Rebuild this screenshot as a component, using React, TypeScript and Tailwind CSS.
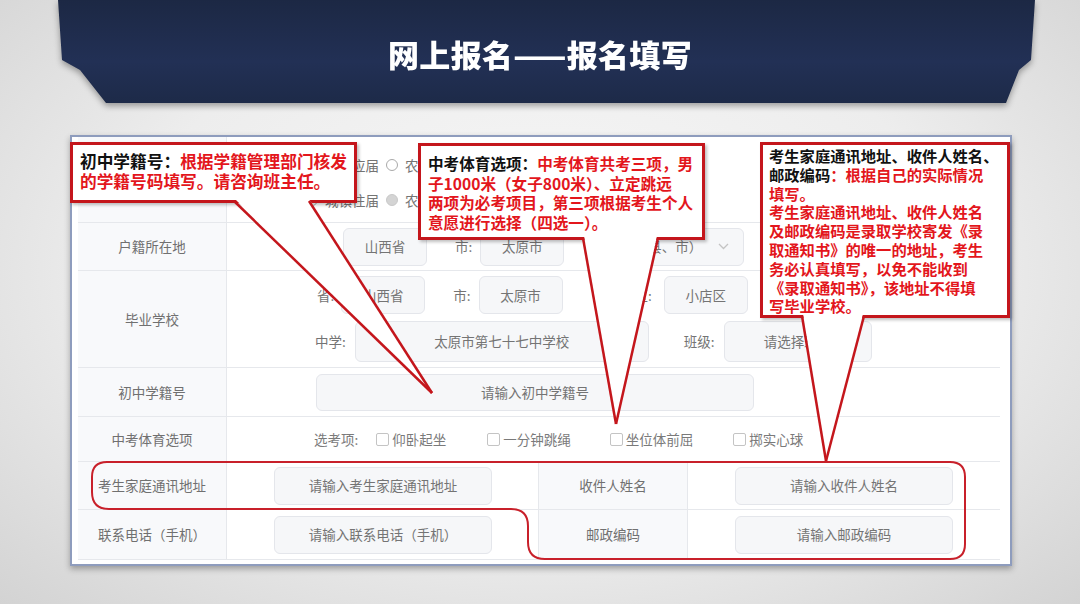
import React from "react";

const FONT = "font-['Noto_Sans_CJK_SC','Noto_Sans',sans-serif]";

function Box({ className = "", children }: { className?: string; children?: React.ReactNode }) {
  return (
    <div
      className={`flex items-center justify-center rounded-[6px] border border-[#e4e6eb] bg-[#f6f7f9] text-[13.5px] text-[#747474] ${className}`}
    >
      {children}
    </div>
  );
}

function Label({ children, className = "" }: { children?: React.ReactNode; className?: string }) {
  return (
    <div
      className={`flex w-[149px] shrink-0 items-center justify-center border-r border-[#e6e8ec] bg-[#f8f9fb] text-[13.5px] text-[#707070] ${className}`}
    >
      {children}
    </div>
  );
}

function Radio({ checked = false }: { checked?: boolean }) {
  return (
    <span
      className={`inline-block h-[12px] w-[12px] shrink-0 rounded-full border ${
        checked ? "border-[#c9c9c9] bg-[#d4d4d4]" : "border-[#a9a9a9] bg-white"
      }`}
    />
  );
}

function Check() {
  return <span className="inline-block h-[13px] w-[13px] shrink-0 rounded-[2px] border border-[#c4c4c4] bg-white" />;
}

export default function App() {
  return (
    <div
      className={`relative h-[604px] w-[1080px] overflow-hidden bg-[radial-gradient(ellipse_at_50%_45%,#f8f8f8_0%,#ededed_55%,#d3d3d3_100%)] ${FONT}`}
    >
      {/* Title banner */}
      <div className="h-[104px] [filter:drop-shadow(0_3px_3px_rgba(0,0,0,0.35))]">
        <div className="flex h-[103px] items-center justify-center bg-[linear-gradient(180deg,#1c2844_0%,#223055_60%,#1d2a48_100%)] pt-[4px] [clip-path:polygon(58px_0,1035px_0,1031px_60px,1019px_70px,1006px_103px,106px_103px,80px_70px,62px_60px)]">
          <h1 className="text-[31px] font-black leading-none tracking-[0.3px] text-white">网上报名——报名填写</h1>
        </div>
      </div>

      {/* Form panel */}
      <div className="ml-[70px] mt-[31px] h-[431px] w-[942px] border-2 border-[#8e9cbd] bg-white pl-[6px] pr-[10px] shadow-[0_3px_6px_rgba(0,0,0,0.3)]">
        {/* Row A */}
        <div className="flex h-[86px] border-b border-[#e6e8ec]">
          <Label />
          <div className="flex flex-col gap-[15px] pl-[79px] pt-[18px] text-[13.5px] text-[#747474]">
            <div className="flex h-[20px] items-center">
              <Radio />
              <span className="ml-[7px]">城镇应届</span>
              <span className="ml-[7px] flex"><Radio /></span>
              <span className="ml-[7px]">农村应届</span>
            </div>
            <div className="flex h-[20px] items-center">
              <Radio />
              <span className="ml-[7px]">城镇往届</span>
              <span className="ml-[7px] flex"><Radio checked /></span>
              <span className="ml-[7px]">农村往届</span>
            </div>
          </div>
        </div>

        {/* Row B 户籍所在地 */}
        <div className="flex h-[48px] border-b border-[#e6e8ec]">
          <Label>户籍所在地</Label>
          <div className="flex items-center pl-[116px] text-[13.5px] text-[#747474]">
            <Box className="h-[38px] w-[84px]">山西省</Box>
            <span className="ml-[28px]">市:</span>
            <Box className="ml-[8px] h-[38px] w-[84px]">太原市</Box>
            <Box className="ml-[30px] h-[38px] w-[150px] !justify-end pr-[14px]">
              <span>区（县、市）</span>
              <svg className="ml-[16px]" width="11" height="7" viewBox="0 0 11 7">
                <path d="M1 1l4.5 4.5L10 1" fill="none" stroke="#c4c4c4" strokeWidth="1.3" />
              </svg>
            </Box>
          </div>
        </div>

        {/* Row C 毕业学校 */}
        <div className="flex h-[97px] border-b border-[#e6e8ec]">
          <Label>毕业学校</Label>
          <div className="flex flex-col gap-[7px] pt-[5px] text-[13.5px] text-[#747474]">
            <div className="flex items-center pl-[90px]">
              <span>省:</span>
              <Box className="ml-[7px] h-[38px] w-[84px]">山西省</Box>
              <span className="ml-[28px]">市:</span>
              <Box className="ml-[8px] h-[38px] w-[84px]">太原市</Box>
              <span className="ml-[72px]">区:</span>
              <Box className="ml-[12px] h-[38px] w-[84px]">小店区</Box>
            </div>
            <div className="flex items-center pl-[88px]">
              <span>中学:</span>
              <Box className="ml-[9px] h-[41px] w-[294px]">太原市第七十七中学校</Box>
              <span className="ml-[35px]">班级:</span>
              <Box className="ml-[9px] h-[41px] w-[148px]">请选择班级</Box>
            </div>
          </div>
        </div>

        {/* Row D 初中学籍号 */}
        <div className="flex h-[49px] border-b border-[#e6e8ec]">
          <Label>初中学籍号</Label>
          <div className="flex items-center pl-[89px]">
            <Box className="h-[37px] w-[438px]">请输入初中学籍号</Box>
          </div>
        </div>

        {/* Row E 中考体育选项 */}
        <div className="flex h-[45px] border-b border-[#e6e8ec]">
          <Label>中考体育选项</Label>
          <div className="flex items-center pl-[87px] text-[13.5px] text-[#7a7a7a]">
            <span>选考项:</span>
            <span className="ml-[18px] flex"><Check /></span>
            <span className="ml-[3px]">仰卧起坐</span>
            <span className="ml-[41px] flex"><Check /></span>
            <span className="ml-[3px]">一分钟跳绳</span>
            <span className="ml-[39px] flex"><Check /></span>
            <span className="ml-[3px]">坐位体前屈</span>
            <span className="ml-[40px] flex"><Check /></span>
            <span className="ml-[3px]">掷实心球</span>
          </div>
        </div>

        {/* Row F */}
        <div className="flex h-[48px] border-b border-[#e6e8ec]">
          <Label>考生家庭通讯地址</Label>
          <div className="flex w-[312px] items-center border-r border-[#e6e8ec] pl-[47px]">
            <Box className="h-[38px] w-[218px]">请输入考生家庭通讯地址</Box>
          </div>
          <Label>收件人姓名</Label>
          <div className="flex items-center pl-[47px]">
            <Box className="h-[38px] w-[218px]">请输入收件人姓名</Box>
          </div>
        </div>

        {/* Row G */}
        <div className="flex h-[50px] border-b border-[#e6e8ec]">
          <Label>联系电话（手机）</Label>
          <div className="flex w-[312px] items-center border-r border-[#e6e8ec] pl-[47px]">
            <Box className="h-[38px] w-[218px]">请输入联系电话（手机）</Box>
          </div>
          <Label>邮政编码</Label>
          <div className="flex items-center pl-[47px]">
            <Box className="h-[38px] w-[218px]">请输入邮政编码</Box>
          </div>
        </div>
      </div>

      {/* Callout 1 */}
      <div className="absolute left-[70px] top-[142px] h-[61px] w-[287px] border-[3px] border-[#c4161c] bg-white pl-[7px] pt-[6px] text-[16.7px] font-bold leading-[20px] shadow-[2px_2px_3px_rgba(0,0,0,0.25)]">
        <div>
          <span className="text-[#111]">初中学籍号：</span>
          <span className="text-[#e3161c]">根据学籍管理部门核发</span>
        </div>
        <div className="text-[#e3161c]">的学籍号码填写。请咨询班主任。</div>
      </div>

      {/* Callout 2 */}
      <div className="absolute left-[418px] top-[143px] h-[97px] w-[287px] border-[3px] border-[#c4161c] bg-white pl-[7px] pt-[8px] text-[15.6px] font-bold leading-[19.5px] shadow-[2px_2px_3px_rgba(0,0,0,0.25)]">
        <div>
          <span className="text-[#111]">中考体育选项：</span>
          <span className="text-[#e3161c]">中考体育共考三项，男</span>
        </div>
        <div className="text-[#e3161c]">子1000米（女子800米）、立定跳远</div>
        <div className="text-[#e3161c]">两项为必考项目，第三项根据考生个人</div>
        <div className="text-[#e3161c]">意愿进行选择（四选一）。</div>
      </div>

      {/* Callout 3 */}
      <div className="absolute left-[760px] top-[142px] h-[176px] w-[250px] border-[3px] border-[#c4161c] bg-white pl-[6px] pt-[1px] text-[15.3px] font-bold leading-[18.8px] shadow-[2px_2px_3px_rgba(0,0,0,0.25)]">
        <div className="text-[#111]">考生家庭通讯地址、收件人姓名、</div>
        <div>
          <span className="text-[#111]">邮政编码</span>
          <span className="text-[#e3161c]">：根据自己的实际情况</span>
        </div>
        <div className="text-[#e3161c]">填写。</div>
        <div className="text-[#e3161c]">考生家庭通讯地址、收件人姓名</div>
        <div className="text-[#e3161c]">及邮政编码是录取学校寄发《录</div>
        <div className="text-[#e3161c]">取通知书》的唯一的地址，考生</div>
        <div className="text-[#e3161c]">务必认真填写，以免不能收到</div>
        <div className="text-[#e3161c]">《录取通知书》，该地址不得填</div>
        <div className="text-[#e3161c]">写毕业学校。</div>
      </div>

      {/* Tails and address outline */}
      <svg className="pointer-events-none absolute left-0 top-0" width="1080" height="604" viewBox="0 0 1080 604">
        <path
          d="M107 462 L950 462 Q965 462 965 477 L965 544 Q965 559 950 559 L545 559 Q528 559 528 542 L528 526 Q528 509 511 509 L109 509 Q92 509 92 492 L92 477 Q92 462 107 462 Z"
          fill="none"
          stroke="#c8202a"
          strokeWidth="2"
        />
        {/* tail 1 */}
        <polygon points="235,199 309,199 432,393" fill="#fff" />
        <line x1="234" y1="201" x2="432" y2="393" stroke="#c4161c" strokeWidth="2.5" />
        <line x1="309" y1="201" x2="432" y2="393" stroke="#c4161c" strokeWidth="2.5" />
        {/* tail 2 */}
        <polygon points="584,236 657,236 616,424" fill="#fff" />
        <line x1="583" y1="238" x2="616" y2="424" stroke="#c4161c" strokeWidth="2.5" />
        <line x1="658" y1="238" x2="616" y2="424" stroke="#c4161c" strokeWidth="2.5" />
        {/* tail 3 */}
        <polygon points="803,314 863,314 826,461" fill="#fff" />
        <line x1="802" y1="316" x2="826" y2="461" stroke="#c4161c" strokeWidth="2.5" />
        <line x1="864" y1="316" x2="826" y2="461" stroke="#c4161c" strokeWidth="2.5" />
      </svg>
    </div>
  );
}
